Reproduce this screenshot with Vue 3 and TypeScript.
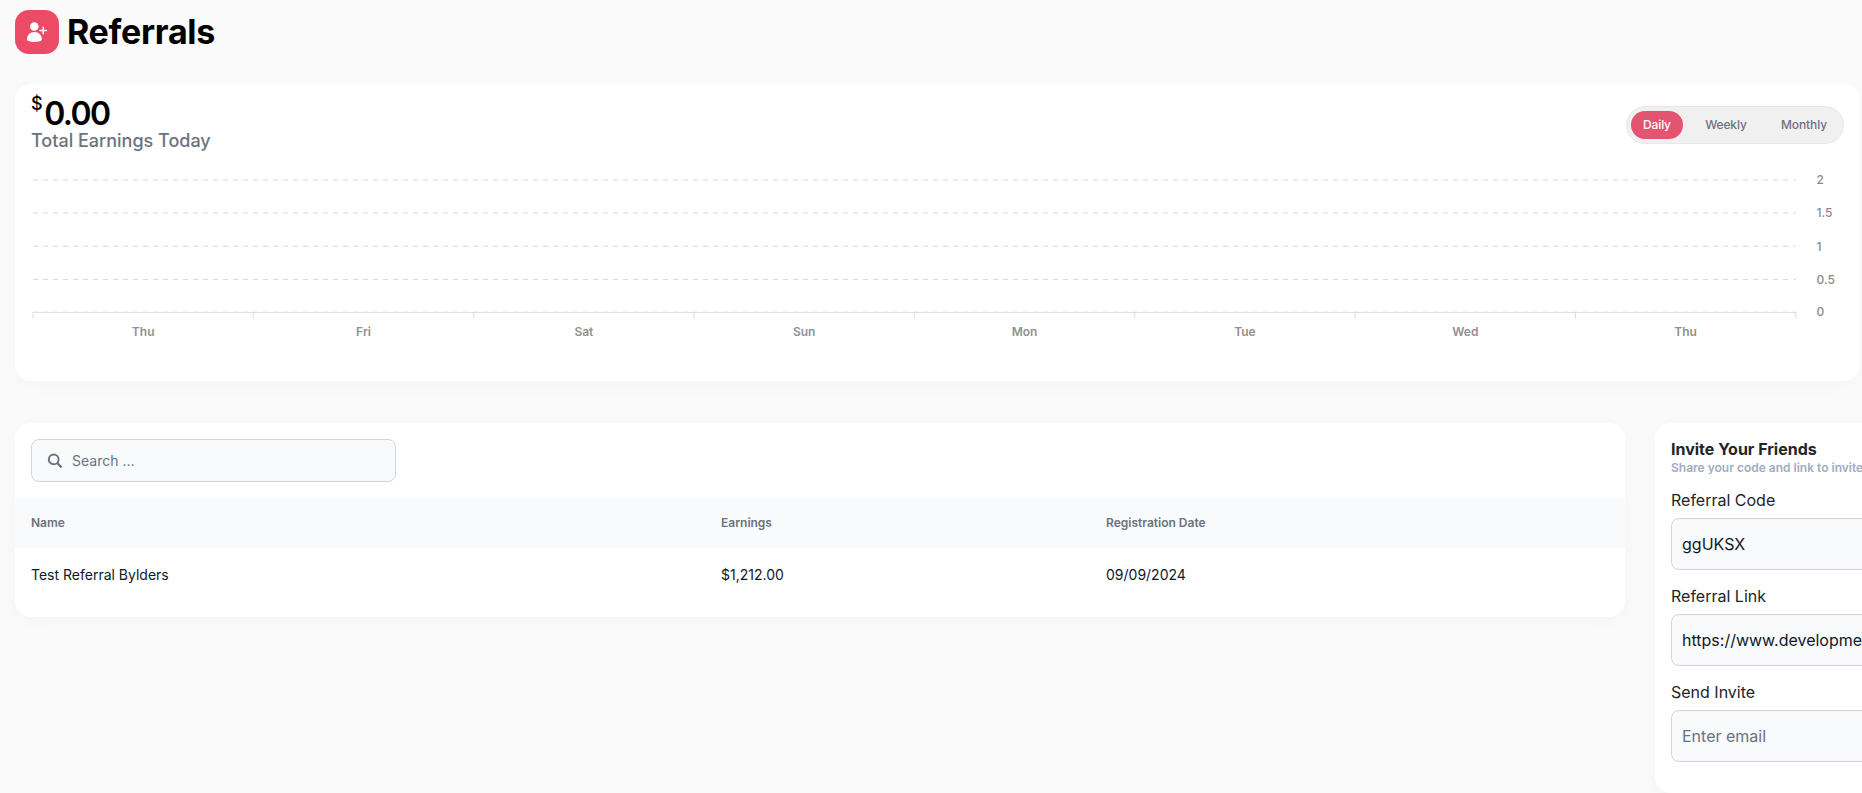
<script setup lang="ts">
import { ref } from 'vue'

type Period = 'Daily' | 'Weekly' | 'Monthly'

const periods: Period[] = ['Daily', 'Weekly', 'Monthly']
const active = ref<Period>('Daily')
const search = ref('')
const email = ref('')
const code = ref('ggUKSX')
const link = ref('https://www.development.bylders.com/referral/ggUKSX')

const days = ['Thu', 'Fri', 'Sat', 'Sun', 'Mon', 'Tue', 'Wed', 'Thu']
const step = 220.35
const ticks = Array.from({ length: days.length + 1 }, (_, i) => 2 + i * step)
const rows = [
  { label: '2', y: 12 },
  { label: '1.5', y: 45 },
  { label: '1', y: 78.3 },
  { label: '0.5', y: 111.4 },
  { label: '0', y: 144.2 },
]
const referrals = [{ name: 'Test Referral Bylders', earnings: '$1,212.00', date: '09/09/2024' }]
</script>

<template>
  <main class="page">
    <header class="heading">
      <span class="badge">
        <svg width="44" height="44" viewBox="0 0 44 44" fill="#fff">
          <circle cx="19.3" cy="16.5" r="4.3" />
          <path d="M12 29.200c0-4.200 3.100-7.200 7.400-7.200s7.400 3 7.400 7.200c0 1.900-3.200 2.700-7.400 2.700s-7.400-.8-7.400-2.700z" />
          <path d="M28.200 17.300v6.400M25 20.500h6.400" stroke="#fff" stroke-width="1.5" stroke-linecap="round" />
        </svg>
      </span>
      <h1>Referrals</h1>
    </header>

    <section class="card earnings">
      <div class="top">
        <div>
          <div class="amount"><span class="currency">$</span><span class="value">0.00</span></div>
          <div class="caption">Total Earnings Today</div>
        </div>
        <div class="toggle">
          <button v-for="p in periods" :key="p" :class="{ on: p === active }" @click="active = p">{{ p }}</button>
        </div>
      </div>
      <svg class="chart" width="1829" height="190" viewBox="0 0 1829 190">
        <g v-for="r in rows" :key="r.label">
          <line x1="2" x2="1764.8" :y1="r.y" :y2="r.y" stroke="#d8d8d8" stroke-dasharray="5 5" />
          <text class="num" x="1785.5" :y="r.y + 4.2">{{ r.label }}</text>
        </g>
        <line x1="2" x2="1765" y1="144.5" y2="144.5" stroke="#e0e0e0" />
        <line v-for="t in ticks" :key="t" :x1="t" :x2="t" y1="144" y2="150.5" stroke="#dedede" />
        <text v-for="(d, i) in days" :key="i" class="day" :x="2 + (i + 0.5) * step" y="168.3">{{ d }}</text>
      </svg>
    </section>

    <div class="columns">
      <section class="card list">
        <label class="search">
          <svg width="16" height="16" viewBox="0 0 16 16" fill="none" stroke="#6b7280" stroke-width="1.9">
            <circle cx="6.7" cy="6.4" r="4.9" />
            <path d="M10.200 10l4.400 4.400" stroke-width="2.2" />
          </svg>
          <input v-model="search" placeholder="Search ..." />
        </label>
        <div class="row head"><span>Name</span><span>Earnings</span><span>Registration Date</span></div>
        <div v-for="r in referrals" :key="r.name" class="row">
          <span>{{ r.name }}</span><span>{{ r.earnings }}</span><span>{{ r.date }}</span>
        </div>
      </section>

      <aside class="card invite">
        <h2>Invite Your Friends</h2>
        <p>Share your code and link to invite friends</p>
        <label>Referral Code<input v-model="code" readonly /></label>
        <label>Referral Link<input v-model="link" readonly /></label>
        <label>Send Invite<input v-model="email" placeholder="Enter email" /></label>
      </aside>
    </div>
  </main>
</template>

<style>
body {
  background: #fafafa;
  overflow: hidden;
}
</style>

<style scoped>
* {
  box-sizing: border-box;
}
.page {
  width: 1862px;
  height: 793px;
  overflow: hidden;
  padding: 10px 0 0 15px;
  background: #fafafa;
  font-family: Inter, 'Liberation Sans', sans-serif;
  color: #000;
}
.heading {
  display: flex;
  align-items: center;
  gap: 8px;
  height: 44px;
}
.badge {
  width: 44px;
  height: 44px;
  border-radius: 14px;
  background: #ec4b67;
}
.badge svg {
  display: block;
}
h1 {
  margin: 0;
  font-size: 34px;
  line-height: 44px;
  font-weight: 700;
  letter-spacing: -0.3px;
}
.card {
  background: #fff;
  border-radius: 16px;
  box-shadow: 0 4px 20px rgba(0, 0, 0, 0.025);
}
.earnings {
  width: 1845px;
  height: 297px;
  margin-top: 30px;
  padding: 0 0 0 16px;
}
.top {
  display: flex;
  justify-content: space-between;
  padding-right: 16px;
  height: 84px;
}
.amount {
  display: flex;
  height: 45px;
  gap: 1.5px;
}
.currency {
  font-size: 18px;
  line-height: 20px;
  padding-top: 10px;
  font-weight: 500;
}
.value {
  font-size: 32px;
  line-height: 31px;
  padding-top: 14px;
  font-weight: 600;
  letter-spacing: -1.6px;
}
.caption {
  font-size: 18px;
  line-height: 24px;
  font-weight: 500;
  color: #6b7280;
}
.toggle {
  display: flex;
  width: 218px;
  height: 38px;
  margin-top: 22px;
  padding: 4px;
  border: 1px solid #e8e8e8;
  border-radius: 19px;
  background: #f0f0f0;
}
.toggle button {
  height: 28px;
  margin-right: 10.3px;
  padding: 0 12px;
  border: 0;
  border-radius: 14px;
  background: none;
  font: 500 12px/28px Inter, sans-serif;
  letter-spacing: -0.12px;
  color: #6b7280;
  white-space: nowrap;
}
.toggle button.on {
  background: #e25470;
  color: #fff;
}
.chart {
  display: block;
}
.num {
  font-size: 12px;
  font-weight: 500;
  fill: #8b8b8b;
}
.day {
  font-size: 12px;
  font-weight: 600;
  fill: #909090;
  text-anchor: middle;
}
.columns {
  display: flex;
  align-items: flex-start;
  gap: 30px;
  width: 2040px;
  margin-top: 42px;
}
.list {
  width: 1610px;
  height: 194px;
  padding-top: 16px;
}
.search {
  display: flex;
  align-items: center;
  gap: 9px;
  width: 365px;
  height: 43px;
  margin: 0 0 16px 16px;
  padding-left: 15px;
  border: 1px solid #d1d5db;
  border-radius: 8px;
  background: #f9fafc;
}
input {
  border: 0;
  outline: 0;
  padding: 0;
  background: none;
  font: 400 16px/24px Inter, sans-serif;
  color: #111827;
}
input::placeholder {
  color: #6b7280;
  opacity: 1;
}
.search input {
  width: 300px;
  font-size: 14px;
}
.row {
  display: grid;
  grid-template-columns: 690px 385px 1fr;
  padding-left: 16px;
  font-size: 14px;
  line-height: 54px;
  color: #111827;
}
.head {
  height: 50px;
  line-height: 49px;
  font-size: 12px;
  font-weight: 600;
  color: #6b7280;
  background: #f9fafc;
}
.invite {
  width: 400px;
  height: 370px;
  padding: 16px;
}
h2 {
  margin: 0;
  font-size: 16px;
  line-height: 20px;
  font-weight: 700;
  color: #212529;
}
p {
  margin: 0 0 12px;
  font-size: 12px;
  line-height: 18px;
  font-weight: 600;
  color: #a1acc2;
  white-space: nowrap;
}
.invite label {
  display: block;
  height: 96px;
  font-size: 16px;
  line-height: 22px;
  color: #212529;
}
.invite input {
  display: block;
  width: 100%;
  height: 52px;
  margin-top: 7px;
  padding: 0 10px;
  border: 1px solid #d1d5db;
  border-radius: 8px;
  background: #f9fafc;
}
</style>
